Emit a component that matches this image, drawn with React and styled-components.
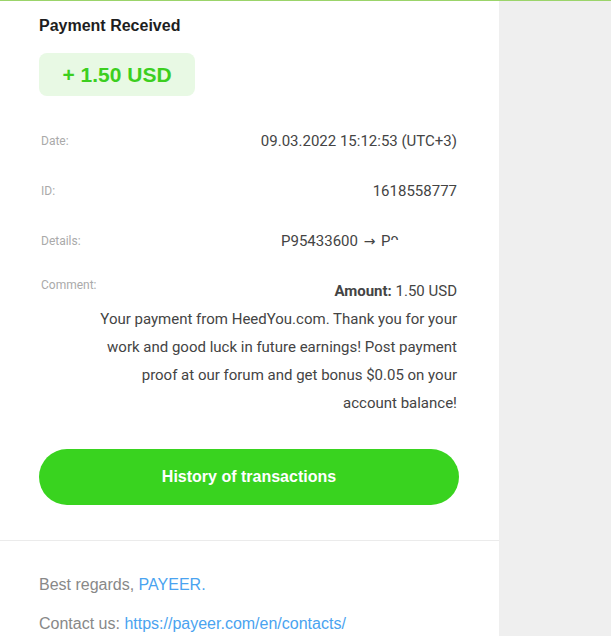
import React from 'react';
import styled, { createGlobalStyle } from 'styled-components';

const GlobalStyle = createGlobalStyle`
  html, body {
    margin: 0;
    padding: 0;
    background: #efefef;
  }
`;

const Page = styled.div`
  display: flex;
  flex-direction: row;
  width: 611px;
  height: 636px;
  overflow: hidden;
  border-top: 1px solid #9bd46a;
  box-sizing: border-box;
  background: #efefef;
`;

const Panel = styled.div`
  width: 499px;
  background: #fff;
  display: flex;
  flex-direction: column;
`;

const Main = styled.div`
  padding: 14px 40px 35px 39px;
  display: flex;
  flex-direction: column;
`;

const Title = styled.div`
  font-family: Arial, "Liberation Sans", sans-serif;
  font-weight: bold;
  font-size: 16px;
  line-height: 22px;
  color: #1e1e1e;
`;

const AmountBox = styled.div`
  align-self: flex-start;
  margin-top: 16px;
  width: 156px;
  height: 43px;
  box-sizing: border-box;
  border-radius: 8px;
  background: #e8f9e4;
  color: #3ccf1f;
  font-family: Arial, "Liberation Sans", sans-serif;
  font-weight: bold;
  font-size: 21px;
  display: flex;
  align-items: center;
  justify-content: center;
`;

const Rows = styled.div`
  margin-top: 31px;
  display: flex;
  flex-direction: column;
  gap: 22px;
`;

const Row = styled.div`
  display: flex;
  flex-direction: row;
  justify-content: space-between;
  align-items: ${p => (p.$top ? 'flex-start' : 'center')};
`;

const Label = styled.div`
  flex: none;
  padding-left: 2px;
  font-family: Roboto, "Noto Sans", sans-serif;
  font-size: 12px;
  line-height: 16px;
  color: #aaa;
`;

const Value = styled.div`
  flex: 1;
  min-width: 0;
  font-family: Roboto, "Noto Sans", sans-serif;
  font-size: 15px;
  line-height: 28px;
  color: #444;
  text-align: right;
  padding-right: 2px;
`;

const Strong = styled.b`
  font-weight: bold;
  color: #444;
`;

const Arrow = styled.span`
  font-family: "DejaVu Sans", sans-serif;
  font-size: 14px;
  margin: 0 2px;
`;

const Clipped = styled.span`
  display: inline-block;
  height: 6px;
  overflow: hidden;
  vertical-align: 6px;
  line-height: 16px;
`;

const Filler = styled.span`
  display: inline-block;
  width: 58px;
`;

const Button = styled.button`
  margin-top: 32px;
  height: 56px;
  width: 100%;
  border: none;
  border-radius: 28px;
  background: #39d31f;
  color: #fff;
  font-family: Arial, "Liberation Sans", sans-serif;
  font-weight: bold;
  font-size: 16px;
  cursor: pointer;
`;

const Divider = styled.div`
  height: 1px;
  background: #ebebeb;
`;

const Footer = styled.div`
  padding: 35px 39px 0;
  display: flex;
  flex-direction: column;
  gap: 21px;
`;

const FooterLine = styled.div`
  font-family: Arial, "Liberation Sans", sans-serif;
  font-size: 16px;
  line-height: 18px;
  color: #888;
`;

const Link = styled.a`
  color: #4aa3f0;
  text-decoration: none;
`;

const App = () => {
  return (
    <>
      <GlobalStyle />
      <Page>
        <Panel>
          <Main>
            <Title>Payment Received</Title>
            <AmountBox>+ 1.50 USD</AmountBox>
            <Rows>
              <Row>
                <Label>Date:</Label>
                <Value>09.03.2022 15:12:53 (UTC+3)</Value>
              </Row>
              <Row>
                <Label>ID:</Label>
                <Value>1618558777</Value>
              </Row>
              <Row>
                <Label>Details:</Label>
                <Value>
                  P95433600 <Arrow>→</Arrow> P<Clipped>9</Clipped><Filler />
                </Value>
              </Row>
              <Row $top>
                <Label>Comment:</Label>
                <Value>
                  <Strong>Amount:</Strong> 1.50 USD
                  <br />
                  Your payment from HeedYou.com. Thank you for your work and good luck in future earnings! Post payment proof at our forum and get bonus $0.05 on your account balance!
                </Value>
              </Row>
            </Rows>
            <Button>History of transactions</Button>
          </Main>
          <Divider />
          <Footer>
            <FooterLine>
              Best regards, <Link href="#">PAYEER.</Link>
            </FooterLine>
            <FooterLine>
              Contact us: <Link href="#">https://payeer.com/en/contacts/</Link>
            </FooterLine>
          </Footer>
        </Panel>
      </Page>
    </>
  );
};

export default App;
